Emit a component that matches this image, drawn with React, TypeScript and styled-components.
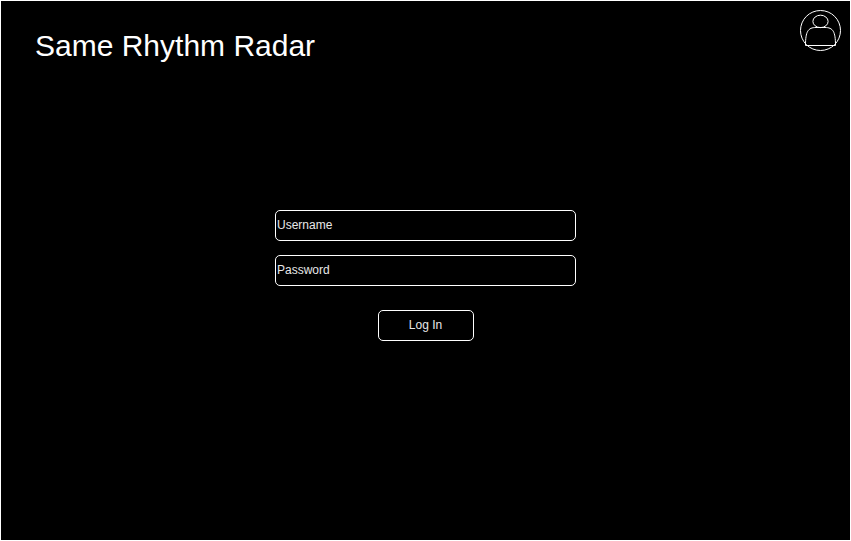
import React from "react";
import styled, { createGlobalStyle } from "styled-components";

const GlobalStyle = createGlobalStyle`
  body {
    margin: 0;
    background: #000;
  }
  *, *::before, *::after {
    box-sizing: border-box;
  }
`;

const Page = styled.div`
  display: flex;
  flex-direction: column;
  width: 851px;
  height: 541px;
  overflow: hidden;
  border: 1px solid #fff;
  background: #000;
  color: #fff;
  font-family: "Liberation Sans", Arial, Helvetica, sans-serif;
`;

const Header = styled.header`
  display: flex;
  justify-content: space-between;
  align-items: flex-start;
  height: 209px;
  padding: 9px 9px 0 34px;
`;

const Title = styled.h1`
  margin: 18px 0 0;
  font-size: 30px;
  line-height: 36px;
  font-weight: 400;
  white-space: nowrap;
`;

const ProfileIcon = styled.svg`
  display: block;
  width: 41px;
  height: 41px;
`;

const LoginForm = styled.form`
  display: flex;
  flex-direction: column;
  align-items: center;
`;

const Field = styled.input`
  width: 301px;
  height: 31px;
  margin: 0 0 14px;
  padding: 0 1px 1px;
  border: 1px solid #fff;
  border-radius: 5px;
  outline: none;
  background: #000;
  color: #e8e8e8;
  font: 12px "Liberation Sans", Arial, Helvetica, sans-serif;
  &::placeholder {
    color: #e8e8e8;
    opacity: 1;
  }
`;

const SubmitButton = styled.button`
  width: 96px;
  height: 31px;
  margin: 10px 0 0 1px;
  padding: 0 1px 1px 0;
  border: 1px solid #fff;
  border-radius: 5px;
  background: #000;
  color: #e8e8e8;
  font: 12px "Liberation Sans", Arial, Helvetica, sans-serif;
`;

export default function App() {
  return (
    <>
      <GlobalStyle />
      <Page>
        <Header>
          <Title>Same Rhythm Radar</Title>
          <ProfileIcon viewBox="0 0 41 41" fill="none" stroke="#fff" aria-label="Profile">
            <circle cx="20.5" cy="20.5" r="20" />
            <ellipse cx="20.5" cy="11.4" rx="7.6" ry="6.2" />
            <path d="M5.5 35.5C5.5 21.5 8 17.5 16 17.5H25C33 17.5 35.5 21.5 35.5 35.5Z" />
          </ProfileIcon>
        </Header>
        <LoginForm onSubmit={(event) => event.preventDefault()}>
          <Field type="text" placeholder="Username" aria-label="Username" />
          <Field type="password" placeholder="Password" aria-label="Password" />
          <SubmitButton type="submit">Log In</SubmitButton>
        </LoginForm>
      </Page>
    </>
  );
}
